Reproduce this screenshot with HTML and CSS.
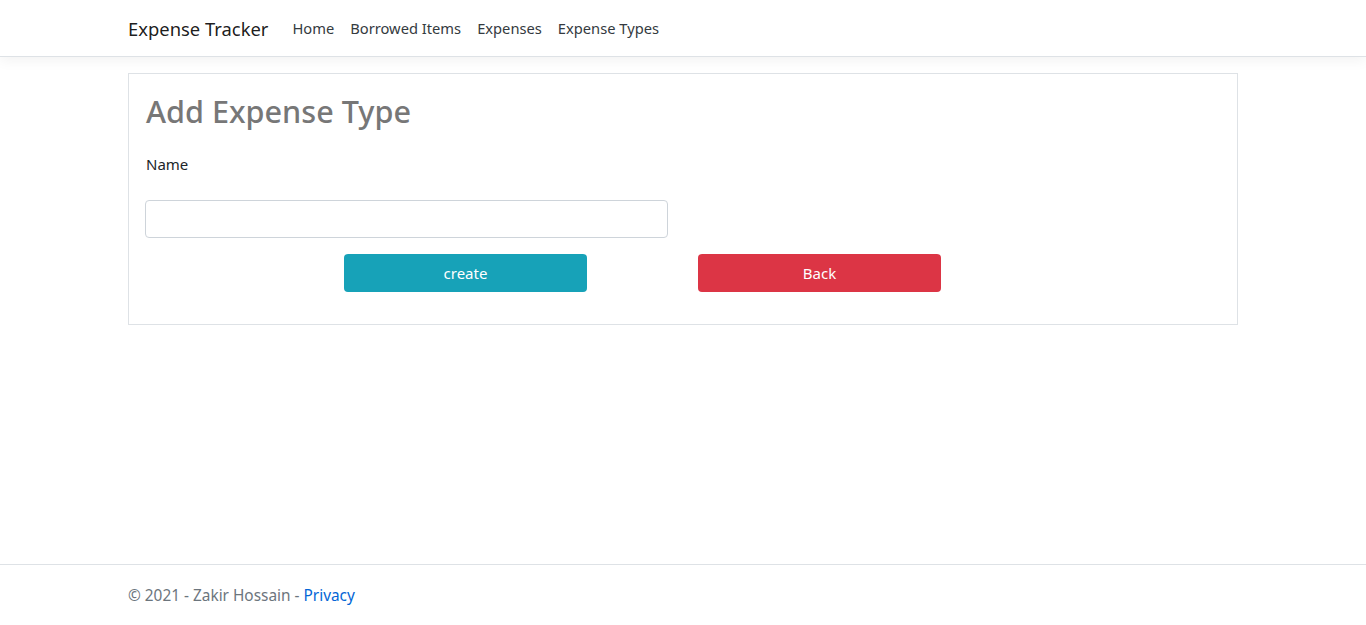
FILE: index.html
```html
<!DOCTYPE html>
<html>
<head>
<meta charset="utf-8">
<title>Add Expense Type</title>
<link rel="stylesheet" href="styles.css">
</head>
<body>
<header class="navbar">
  <div class="container nav-inner">
    <a class="brand" href="#">Expense Tracker</a>
    <nav class="nav-links">
      <a href="#">Home</a>
      <a href="#">Borrowed Items</a>
      <a href="#">Expenses</a>
      <a href="#">Expense Types</a>
    </nav>
  </div>
</header>
<main class="container main">
  <div class="card">
    <h2 class="title">Add Expense Type</h2>
    <label class="label" for="name">Name</label>
    <input class="input" id="name" type="text">
    <div class="actions">
      <button class="btn btn-info">create</button>
      <button class="btn btn-danger">Back</button>
    </div>
  </div>
</main>
<footer class="footer">
  <div class="container footer-inner">© 2021 - Zakir Hossain - <a href="#">Privacy</a></div>
</footer>
</body>
</html>
```
FILE: styles.css
```css
* { box-sizing: border-box; }
html, body { margin: 0; padding: 0; }
body {
  font-family: "Noto Sans", "Open Sans", sans-serif;
  font-size: 15px;
  color: #212529;
  background: #fff;
  min-height: 100vh;
  display: flex;
  flex-direction: column;
}
a { text-decoration: none; }
.container { width: 1110px; margin: 0 auto; }
.navbar {
  height: 57px;
  border-bottom: 1px solid #dee2e6;
  box-shadow: 0 4px 12px rgba(0,0,0,.05);
}
.nav-inner { display: flex; align-items: center; height: 56px; }
.brand { font-size: 18.4px; color: rgba(0,0,0,.9); margin-right: 24px; }
.nav-links { display: flex; gap: 16px; }
.nav-links a { color: #343a40; font-size: 14.7px; }
.main { flex: 1; padding-top: 16px; }
.card {
  border: 1px solid #dee2e6;
  padding: 16px 16px 32px;
  height: 252px;
}
.title {
  margin: 0 0 0 1px;
  font-size: 30.6px;
  font-weight: 500;
  color: #777;
  line-height: 42px;
}
.label { display: block; margin: 21px 0 0 1px; font-size: 15px; line-height: 22px; }
.input {
  display: block;
  margin-top: 25px;
  width: 523px;
  height: 38px;
  border: 1px solid #ced4da;
  border-radius: 4px;
  font: inherit;
  padding: 6px 12px;
}
.actions { display: flex; margin-top: 16px; padding-left: 199px; gap: 111px; }
.btn {
  width: 243px;
  height: 38px;
  border: none;
  border-radius: 4px;
  color: #fff;
  font: inherit;
  font-size: 15px;
}
.btn-info { background: #17a2b8; }
.btn-danger { background: #dc3545; }
.footer { border-top: 1px solid #dee2e6; height: 61px; }
.footer-inner { line-height: 62px; color: #6c757d; font-size: 15.4px; }
.footer-inner a { color: #0366d6; }
```
